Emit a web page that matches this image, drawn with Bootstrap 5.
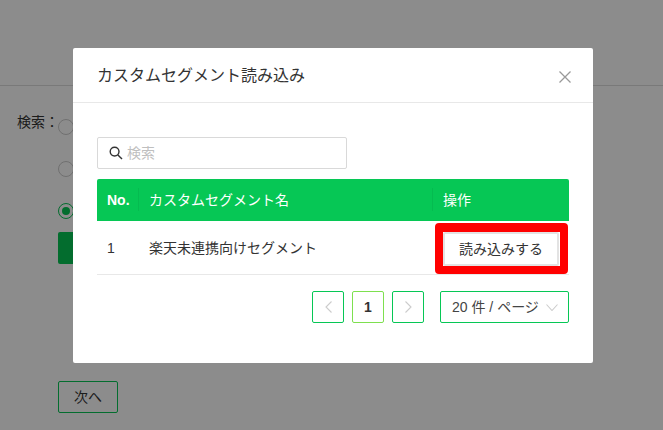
<!DOCTYPE html>
<html lang="ja">
<head>
<meta charset="utf-8">
<title>カスタムセグメント読み込み</title>
<link href="https://cdn.jsdelivr.net/npm/bootstrap@5.3.0/dist/css/bootstrap.min.css" rel="stylesheet">
<style>
html,body{height:430px;overflow:hidden}
body{font-family:"Liberation Sans","Noto Sans CJK JP",sans-serif;font-size:14px;color:#333;background:#fff}
.under{height:430px;padding-top:85px}
.under-rule{border-top:1px solid #ddd}
.under-body{padding:26px 0 0 17px;display:flex}
.under-label{width:41px;line-height:20px;white-space:nowrap}
.under-opts{display:flex;flex-direction:column;padding-top:7px}
.fake-radio{width:16px;height:16px;border:1px solid #ccc;border-radius:50%;margin:0 0 26px;background:#fff;display:block}
.fake-radio.on{border-color:#06c755;position:relative}
.fake-radio.on::after{content:"";position:absolute;inset:3px;border-radius:50%;background:#06c755}
.under-block{width:200px;height:32px;background:#06c755;border-radius:2px;margin-top:-13px}
.under-next{width:60px;height:32px;border:1px solid #06c755;border-radius:2px;background:#fff;margin-top:117px;text-align:center;line-height:30px}
.veil{position:fixed;inset:0;background:rgba(0,0,0,.45)}
.dialog-box{position:fixed;left:73px;top:48px;width:520px;height:315px;background:#fff;border-radius:2px}
.dialog-head{height:55px;border-bottom:1px solid #e8e8e8;padding:2px 22px 0 24px;display:flex;align-items:center;justify-content:space-between;font-size:16px;color:#333}
.dialog-body{padding:34px 24px 0}
.close-x{width:12px;height:12px;display:block;margin-top:1px}
.search-box{width:250px;height:32px;border:1px solid #d9d9d9;border-radius:2px;display:flex;align-items:center;padding-left:11px;gap:4px;margin-bottom:10px;background:#fff}
.search-box input{border:0;outline:0;padding:0;flex:1;min-width:0;font-size:14px;color:#333;background:transparent}
.search-box input::placeholder{color:#bfbfbf;opacity:1}
.seg-table{width:472px;table-layout:fixed;border-collapse:separate;border-spacing:0;margin:0}
.seg-table th{height:42px;background:#06c755;color:#fff;font-weight:400;padding:0 11px;position:relative;vertical-align:middle;border:0}
.seg-table th:first-child{border-radius:2px 0 0 0;font-weight:700;padding-left:10px}
.seg-table th:last-child{border-radius:0 2px 0 0}
.seg-table th+th::before{content:"";position:absolute;left:0;top:9px;height:23px;border-left:1px solid rgba(0,0,0,.06)}
.seg-table td{height:54px;padding:1px 11px 0;border-bottom:1px solid #e8e8e8;vertical-align:middle;color:#333}
.seg-table td:first-child{padding-left:10px}
.seg-table td:last-child{padding:3px 10px 0}
.cell-wrap{position:relative;display:block}
.load-btn{display:block;width:116px;height:34px;margin-left:1px;padding:0;background:#fff;border:2px solid #e3e3e3;border-radius:2px;color:#333;font-size:14px}
.red-mark{position:absolute;left:-7px;top:-9px;width:133px;height:51px;border:8px solid #f00;border-top-width:9px;border-radius:4px;pointer-events:none}
.pager{margin-top:16px;display:flex;justify-content:flex-end;align-items:center;gap:8px;width:472px}
.page-box{width:32px;height:32px;border:1px solid #06c755;border-radius:2px;display:flex;align-items:center;justify-content:center;background:#fff;padding:0}
.page-box.current{border-color:#7ee04f;font-weight:700;color:#333}
.page-select{width:129px;height:32px;border:1px solid #06c755;border-radius:2px;margin-left:8px;display:flex;align-items:center;justify-content:space-between;padding:0 10px 0 11px;color:#444}
</style>
</head>
<body>
<div class="under">
  <div class="under-rule"></div>
  <div class="under-body">
    <div class="under-label">検索：</div>
    <div class="under-opts">
      <span class="fake-radio"></span>
      <span class="fake-radio"></span>
      <span class="fake-radio on"></span>
      <div class="under-block"></div>
      <div class="under-next">次へ</div>
    </div>
  </div>
</div>
<div class="veil"></div>
<div class="dialog-box" role="dialog">
  <div class="dialog-head">
    <span>カスタムセグメント読み込み</span>
    <svg class="close-x" viewBox="0 0 12 12" fill="none" stroke="#999" stroke-width="1.3"><path d="M.5.5 11.500 11.500M11.500.5 .5 11.500"/></svg>
  </div>
  <div class="dialog-body">
    <div class="search-box">
      <svg width="14" height="14" viewBox="0 0 14 14" fill="none" stroke="#333" stroke-width="1.4"><circle cx="5.600" cy="5.600" r="4.400"/><path d="M8.900 8.900 13 13"/></svg>
      <input type="text" placeholder="検索">
    </div>
    <table class="seg-table">
      <colgroup><col style="width:41px"><col style="width:294px"><col></colgroup>
      <thead><tr><th>No.</th><th>カスタムセグメント名</th><th>操作</th></tr></thead>
      <tbody><tr>
        <td>1</td>
        <td>楽天未連携向けセグメント</td>
        <td><span class="cell-wrap"><button class="load-btn" type="button">読み込みする</button><span class="red-mark"></span></span></td>
      </tr></tbody>
    </table>
    <div class="pager">
      <button class="page-box" type="button" aria-label="前へ"><svg width="7" height="12" viewBox="0 0 7 12" fill="none" stroke="#ccc" stroke-width="1.1"><path d="M6.500.5 1 6 6.500 11.500"/></svg></button>
      <button class="page-box current" type="button">1</button>
      <button class="page-box" type="button" aria-label="次へ"><svg width="7" height="12" viewBox="0 0 7 12" fill="none" stroke="#ccc" stroke-width="1.1"><path d="M.5.5 6 6 .5 11.500"/></svg></button>
      <div class="page-select"><span>20 件 / ページ</span><svg width="12" height="7" viewBox="0 0 12 7" fill="none" stroke="#ccc" stroke-width="1.1"><path d="M.5.5 6 6.500 11.500.5"/></svg></div>
    </div>
  </div>
</div>
<script src="https://cdn.jsdelivr.net/npm/bootstrap@5.3.0/dist/js/bootstrap.bundle.min.js"></script>
</body>
</html>
